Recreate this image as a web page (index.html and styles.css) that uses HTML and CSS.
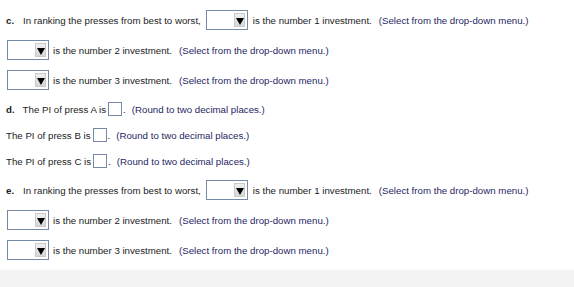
FILE: index.html
```html
<!DOCTYPE html>
<html lang="en">
<head>
    <meta charset="UTF-8">
    <title>Capital budgeting - part c-e</title>
    <link rel="stylesheet" href="styles.css">
</head>
<body>
    <div class="question">
        <div class="row drop-row">
            <b class="label">c.</b>
            <span>In ranking the presses from best to worst,</span>
            <span class="select"><span class="arrow"></span></span>
            <span>is the number 1 investment.</span>
            <span class="hint">(Select from the drop-down menu.)</span>
        </div>
        <div class="row drop-row">
            <span class="select first"><span class="arrow"></span></span>
            <span>is the number 2 investment.</span>
            <span class="hint">(Select from the drop-down menu.)</span>
        </div>
        <div class="row drop-row">
            <span class="select first"><span class="arrow"></span></span>
            <span>is the number 3 investment.</span>
            <span class="hint">(Select from the drop-down menu.)</span>
        </div>

        <div class="row input-row gap-top">
            <b class="label">d.</b>
            <span>The PI of press A is</span>
            <span class="answer"></span><span class="dot">.</span>
            <span class="hint">(Round to two decimal places.)</span>
        </div>
        <div class="row input-row">
            <span>The PI of press B is</span>
            <span class="answer"></span><span class="dot">.</span>
            <span class="hint">(Round to two decimal places.)</span>
        </div>
        <div class="row input-row">
            <span>The PI of press C is</span>
            <span class="answer"></span><span class="dot">.</span>
            <span class="hint">(Round to two decimal places.)</span>
        </div>

        <div class="row drop-row gap-top">
            <b class="label">e.</b>
            <span>In ranking the presses from best to worst,</span>
            <span class="select"><span class="arrow"></span></span>
            <span>is the number 1 investment.</span>
            <span class="hint">(Select from the drop-down menu.)</span>
        </div>
        <div class="row drop-row">
            <span class="select first"><span class="arrow"></span></span>
            <span>is the number 2 investment.</span>
            <span class="hint">(Select from the drop-down menu.)</span>
        </div>
        <div class="row drop-row">
            <span class="select first"><span class="arrow"></span></span>
            <span>is the number 3 investment.</span>
            <span class="hint">(Select from the drop-down menu.)</span>
        </div>
    </div>

    <div class="footer"></div>
</body>
</html>
```

FILE: styles.css
```css
* {
    margin: 0;
    padding: 0;
    box-sizing: border-box;
}

body {
    background: #fff;
    color: #222;
    font-family: 'Liberation Sans', Arial, sans-serif;
    font-size: 9.7px;
    width: 574px;
    height: 287px;
    display: flex;
    flex-direction: column;
}

.question {
    flex: 1;
    padding: 10px 0 0 6px;
    display: flex;
    flex-direction: column;
    gap: 10px;
}

.row {
    display: flex;
    align-items: center;
    white-space: nowrap;
}

.drop-row {
    height: 20px;
}

.input-row {
    height: 14px;
}

.input-row + .input-row {
    margin-top: 2px;
}

.gap-top {
    margin-top: 2px;
}

.label {
    font-weight: bold;
    margin-right: 9px;
}

.input-row .label {
    margin-right: 8px;
}

.hint {
    color: #26265f;
    margin-left: 7px;
}

.select {
    width: 42px;
    height: 20px;
    border: 1px solid #7489a6;
    background: #fff;
    margin: 0 5px;
    padding: 2px;
    display: flex;
    justify-content: flex-end;
}

.select.first {
    margin-left: 1px;
    margin-right: 4px;
}

.arrow {
    width: 11px;
    height: 100%;
    background: linear-gradient(#f0f0f0, #d6d6d6);
    border: 1px solid #c9c9c9;
    position: relative;
}

.arrow::after {
    content: '';
    position: absolute;
    left: 1px;
    top: 4px;
    border-left: 4px solid transparent;
    border-right: 4px solid transparent;
    border-top: 7px solid #000;
}

.answer {
    width: 14px;
    height: 14px;
    border: 1px solid #7489a6;
    background: #fff;
    margin-left: 2px;
}

.dot {
    margin-left: 1px;
}

.input-row .hint {
    margin-left: 6px;
}

.footer {
    height: 17px;
    background: #f3f3f3;
}
```
